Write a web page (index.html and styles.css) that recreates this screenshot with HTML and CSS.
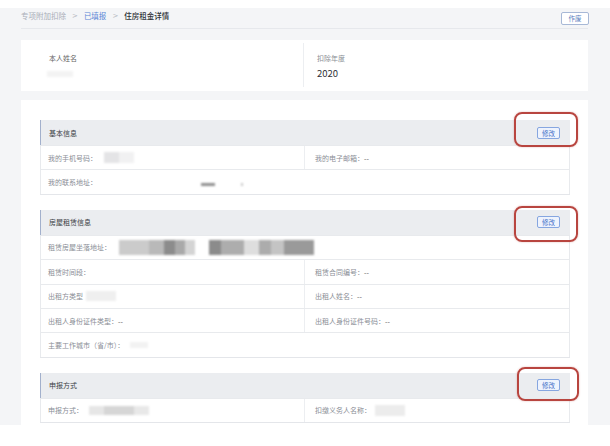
FILE: index.html
```html
<!DOCTYPE html>
<html lang="zh-CN">
<head>
    <meta charset="UTF-8">
    <meta name="viewport" content="width=device-width, initial-scale=1.0">
    <title>住房租金详情</title>
    <link rel="stylesheet" href="styles.css">
</head>
<body>
    <div class="page">
        <div class="topbar">
            <div class="crumbs">
                <span class="crumb-root">专项附加扣除</span>
                <span class="sep">&gt;</span>
                <span class="crumb-link">已填报</span>
                <span class="sep">&gt;</span>
                <span class="crumb-current">住房租金详情</span>
            </div>
            <button class="btn-void">作废</button>
        </div>

        <div class="summary">
            <div class="summary-cell">
                <div class="summary-label">本人姓名</div>
                <div class="summary-value"><span class="blur blur-name"></span></div>
            </div>
            <div class="summary-cell summary-right">
                <div class="summary-label light">扣除年度</div>
                <div class="summary-value">2020</div>
            </div>
        </div>

        <div class="panel">
            <div class="section">
                <div class="section-head">
                    <span class="section-title">基本信息</span>
                    <button class="btn-edit">修改</button>
                    <div class="mark mark-basic"></div>
                </div>
                <div class="row">
                    <div class="cell">我的手机号码：<span class="blur blur-phone"></span></div>
                    <div class="cell">我的电子邮箱：<span class="dash">--</span></div>
                </div>
                <div class="row row-full">
                    <div class="cell">我的联系地址：<span class="blur blur-contact"></span></div>
                </div>
            </div>

            <div class="section">
                <div class="section-head">
                    <span class="section-title">房屋租赁信息</span>
                    <button class="btn-edit">修改</button>
                    <div class="mark mark-rent"></div>
                </div>
                <div class="row row-full">
                    <div class="cell">租赁房屋坐落地址：<span class="blur blur-address"></span></div>
                </div>
                <div class="row">
                    <div class="cell">租赁时间段：</div>
                    <div class="cell">租赁合同编号：<span class="dash">--</span></div>
                </div>
                <div class="row">
                    <div class="cell">出租方类型<span class="blur blur-type"></span></div>
                    <div class="cell">出租人姓名：<span class="dash">--</span></div>
                </div>
                <div class="row">
                    <div class="cell">出租人身份证件类型：<span class="dash">--</span></div>
                    <div class="cell">出租人身份证件号码：<span class="dash">--</span></div>
                </div>
                <div class="row row-full">
                    <div class="cell">主要工作城市（省/市）：<span class="blur blur-city"></span></div>
                </div>
            </div>

            <div class="section">
                <div class="section-head">
                    <span class="section-title">申报方式</span>
                    <button class="btn-edit">修改</button>
                    <div class="mark mark-report"></div>
                </div>
                <div class="row">
                    <div class="cell">申报方式：<span class="blur blur-report"></span></div>
                    <div class="cell">扣缴义务人名称：<span class="blur blur-agent"></span></div>
                </div>
            </div>
        </div>
    </div>
</body>
</html>
```

FILE: styles.css
```css
* {
    box-sizing: border-box;
}
body {
    margin: 0;
    background-color: #fff;
    font-family: "Noto Sans CJK SC", "Noto Sans", sans-serif;
    font-size: 7px;
    color: #333;
}
.page {
    margin-top: 8px;
    height: 417px;
    padding: 0 22px 0 21px;
    background-color: #f4f5f7;
    display: flex;
    flex-direction: column;
}
.topbar {
    height: 21px;
    border-bottom: 1px solid #e6e8ec;
    display: flex;
    justify-content: space-between;
    align-items: flex-start;
}
.crumbs {
    padding-top: 2px;
    line-height: 12px;
    font-size: 7.5px;
    display: flex;
    gap: 6px;
}
.crumb-root {
    color: #a9aeb8;
}
.sep {
    color: #b4b8c0;
    font-family: "DejaVu Sans", sans-serif;
    font-size: 7px;
}
.crumb-link {
    color: #5a86d6;
}
.crumb-current {
    color: #2f3238;
    font-weight: 500;
}
.btn-void {
    margin-top: 4px;
    margin-right: -1px;
    width: 28px;
    height: 13px;
    padding: 0;
    border: 1px solid #a7b8d6;
    border-radius: 2px;
    background-color: #fff;
    color: #5a7dbd;
    font-family: inherit;
    font-size: 6.5px;
    line-height: 11px;
}
.summary {
    margin-top: 11px;
    height: 51px;
    background-color: #fff;
    display: grid;
    grid-template-columns: 283px 1fr;
}
.summary-cell {
    margin-top: 3px;
    height: 44px;
    padding: 9px 0 0 28px;
    border-right: 1px solid #eceef1;
}
.summary-right {
    padding-left: 13px;
    border-right: none;
}
.summary-label {
    line-height: 12px;
    color: #666;
}
.summary-label.light {
    color: #8b8f96;
}
.summary-value {
    margin-top: 2px;
    height: 14px;
    line-height: 14px;
    font-size: 9.5px;
    color: #2f3238;
}
.panel {
    margin-top: 9px;
    flex: 1;
    padding: 20px 18px 0 19px;
    background-color: #fff;
}
.section + .section {
    margin-top: 15px;
}
.section {
    border-bottom: 1px solid #e4e6ea;
}
.section-head {
    position: relative;
    height: 25px;
    padding: 0 10px 0 8px;
    border-left: 1px solid #a2b0cc;
    background-color: #ebedf0;
    display: flex;
    justify-content: space-between;
    align-items: center;
}
.section-title {
    color: #3a3d44;
}
.btn-edit {
    width: 23px;
    height: 12px;
    padding: 0;
    border: 1px solid #86a6e0;
    border-radius: 2px;
    background-color: #eef3fd;
    color: #4470c8;
    font-family: inherit;
    font-size: 6.5px;
    line-height: 10px;
}
.mark {
    position: absolute;
    border: 2.5px solid #b8453f;
    border-radius: 8px;
    box-shadow: 0 0 2px rgba(184, 69, 63, 0.4);
}
.mark-basic {
    right: -8px;
    top: -8px;
    width: 64px;
    height: 35px;
}
.mark-rent {
    right: -8px;
    top: -4px;
    width: 64px;
    height: 36px;
}
.mark-report {
    right: -9px;
    top: -6px;
    width: 62px;
    height: 34px;
}
.row {
    height: 24.4px;
    border: 1px solid #e8eaed;
    border-bottom: none;
    display: grid;
    grid-template-columns: 263px 1fr;
}
.row-full {
    grid-template-columns: 1fr;
}
.cell {
    padding-left: 7px;
    display: flex;
    align-items: center;
    color: #8a8e96;
    white-space: nowrap;
}
.cell + .cell {
    padding-left: 10px;
    border-left: 1px solid #eceef1;
}
.dash {
    color: #555;
}
.blur {
    display: inline-block;
    filter: blur(1px);
}
.blur-name {
    width: 26px;
    height: 6px;
    margin-left: -2px;
    background-color: #f3f3f3;
}
.blur-phone {
    width: 30px;
    height: 11px;
    margin-left: 7px;
    background: linear-gradient(to right, #e4e4e6 0 15px, #f1f1f2 15px 30px);
}
.blur-contact {
    width: 46px;
    height: 3px;
    margin-left: 104px;
    margin-top: 4px;
    background: linear-gradient(to right, #8f8f8f 0 14px, transparent 14px 40px, #c8c8c8 40px 42px, transparent 42px);
}
.blur-address {
    width: 195px;
    height: 15px;
    margin-left: 8px;
    background: linear-gradient(to right,
        #cbcbcb 0 30px, #b9b9b9 30px 45px, #8c8c8c 45px 56px, #a9a9a9 56px 66px,
        #d4d4d4 66px 76px, transparent 76px 90px, #8b8b8b 90px 102px, #adadad 102px 125px,
        #dedede 125px 140px, #acacac 140px 152px, #c4c4c4 152px 165px, #9a9a9a 165px 195px);
}
.blur-type {
    width: 30px;
    height: 10px;
    margin-left: 3px;
    background-color: #efefef;
}
.blur-city {
    width: 18px;
    height: 6px;
    margin-left: 6px;
    background-color: #f2f2f2;
}
.blur-report {
    width: 60px;
    height: 9px;
    margin-left: 6px;
    background: linear-gradient(to right, #e6e6e6 0 15px, #d6d6d6 15px 45px, #e8e8e8 45px 60px);
}
.blur-agent {
    width: 30px;
    height: 11px;
    margin-left: 4px;
    background-color: #ececec;
}
```
